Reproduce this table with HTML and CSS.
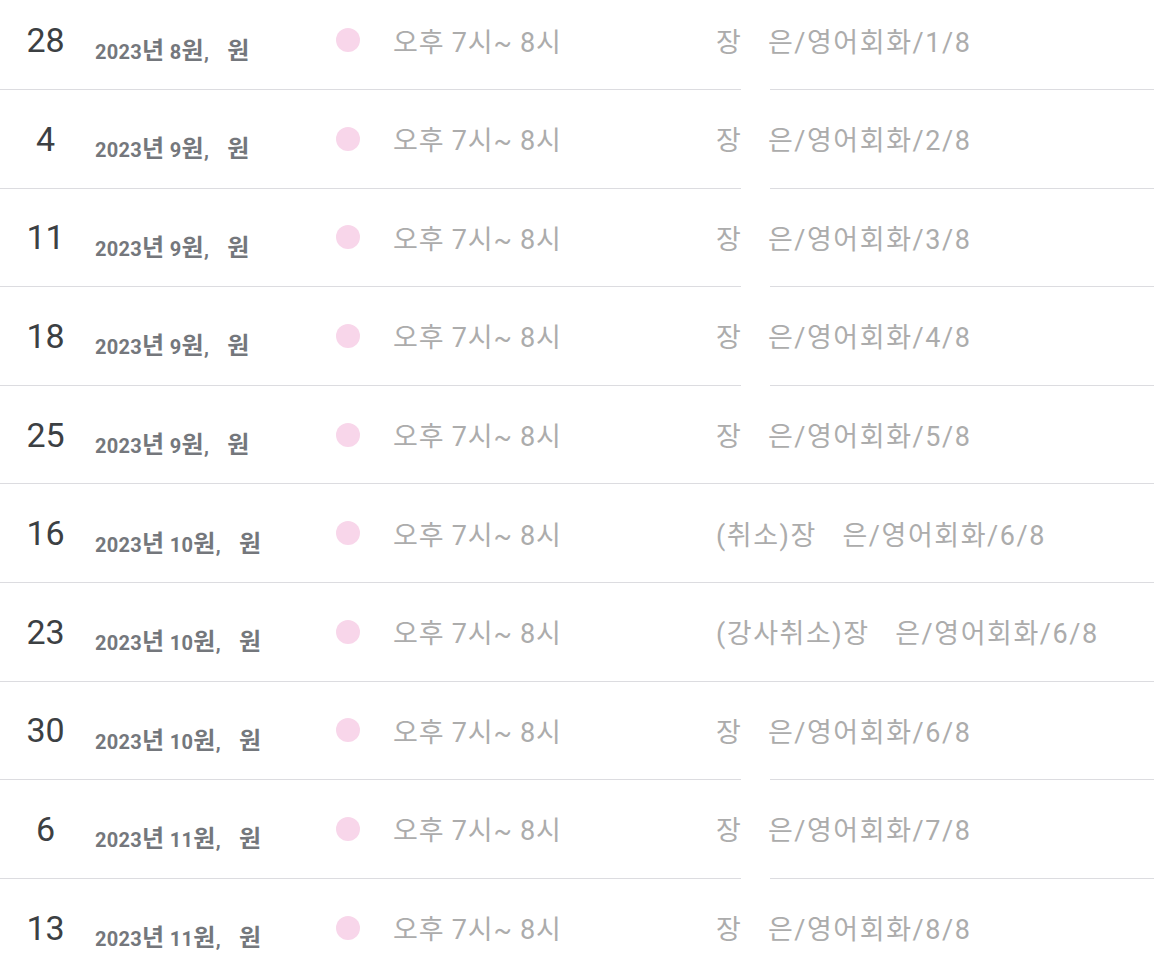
FILE: index.html
```html
<!DOCTYPE html>
<html lang="ko">
<head>
<meta charset="utf-8">
<link rel="stylesheet" href="styles.css">
</head>
<body>
<div class="list">
  <div class="row">
    <div class="date"><span class="day">28</span><span class="label">2023<span class="k">년</span> 8<span class="k">원</span>,<span class="k dow">원</span></span></div>
    <span class="dot"></span>
    <div class="time">오후 7시~ 8시</div>
    <div class="title">장<span class="redact"></span>은/영어회화/1/8</div>
    <span class="gap"></span>
  </div>
  <div class="row">
    <div class="date"><span class="day">4</span><span class="label">2023<span class="k">년</span> 9<span class="k">원</span>,<span class="k dow">원</span></span></div>
    <span class="dot"></span>
    <div class="time">오후 7시~ 8시</div>
    <div class="title">장<span class="redact"></span>은/영어회화/2/8</div>
    <span class="gap"></span>
  </div>
  <div class="row">
    <div class="date"><span class="day">11</span><span class="label">2023<span class="k">년</span> 9<span class="k">원</span>,<span class="k dow">원</span></span></div>
    <span class="dot"></span>
    <div class="time">오후 7시~ 8시</div>
    <div class="title">장<span class="redact"></span>은/영어회화/3/8</div>
    <span class="gap"></span>
  </div>
  <div class="row">
    <div class="date"><span class="day">18</span><span class="label">2023<span class="k">년</span> 9<span class="k">원</span>,<span class="k dow">원</span></span></div>
    <span class="dot"></span>
    <div class="time">오후 7시~ 8시</div>
    <div class="title">장<span class="redact"></span>은/영어회화/4/8</div>
    <span class="gap"></span>
  </div>
  <div class="row">
    <div class="date"><span class="day">25</span><span class="label">2023<span class="k">년</span> 9<span class="k">원</span>,<span class="k dow">원</span></span></div>
    <span class="dot"></span>
    <div class="time">오후 7시~ 8시</div>
    <div class="title">장<span class="redact"></span>은/영어회화/5/8</div>
  </div>
  <div class="row">
    <div class="date"><span class="day">16</span><span class="label">2023<span class="k">년</span> 10<span class="k">원</span>,<span class="k dow">원</span></span></div>
    <span class="dot"></span>
    <div class="time">오후 7시~ 8시</div>
    <div class="title">(취소)장<span class="redact"></span>은/영어회화/6/8</div>
  </div>
  <div class="row">
    <div class="date"><span class="day">23</span><span class="label">2023<span class="k">년</span> 10<span class="k">원</span>,<span class="k dow">원</span></span></div>
    <span class="dot"></span>
    <div class="time">오후 7시~ 8시</div>
    <div class="title">(강사취소)장<span class="redact"></span>은/영어회화/6/8</div>
  </div>
  <div class="row">
    <div class="date"><span class="day">30</span><span class="label">2023<span class="k">년</span> 10<span class="k">원</span>,<span class="k dow">원</span></span></div>
    <span class="dot"></span>
    <div class="time">오후 7시~ 8시</div>
    <div class="title">장<span class="redact"></span>은/영어회화/6/8</div>
    <span class="gap"></span>
  </div>
  <div class="row">
    <div class="date"><span class="day">6</span><span class="label">2023<span class="k">년</span> 11<span class="k">원</span>,<span class="k dow">원</span></span></div>
    <span class="dot"></span>
    <div class="time">오후 7시~ 8시</div>
    <div class="title">장<span class="redact"></span>은/영어회화/7/8</div>
    <span class="gap"></span>
  </div>
  <div class="row">
    <div class="date"><span class="day">13</span><span class="label">2023<span class="k">년</span> 11<span class="k">원</span>,<span class="k dow">원</span></span></div>
    <span class="dot"></span>
    <div class="time">오후 7시~ 8시</div>
    <div class="title">장<span class="redact"></span>은/영어회화/8/8</div>
  </div>
</div>
</body>
</html>
```

FILE: styles.css
```css
html, body {
  margin: 0;
  padding: 0;
  background: #ffffff;
}

body {
  font-family: Roboto, "Noto Sans CJK KR", sans-serif;
  overflow: hidden;
}

.list {
  margin-top: -8.6px;
}

.row {
  position: relative;
  display: flex;
  align-items: center;
  height: 97.6px;
  border-bottom: 1px solid #dcdce0;
}

.date {
  display: flex;
  align-items: center;
  width: 336px;
  flex: none;
}

.day {
  width: 91px;
  text-align: center;
  font-size: 34px;
  color: #3c4043;
  line-height: 40px;
}

.label {
  margin-left: 4px;
  margin-top: 22px;
  font-size: 20px;
  font-weight: 700;
  color: #74777c;
  line-height: 24px;
  white-space: nowrap;
  letter-spacing: 0.3px;
}

.label .k {
  font-size: 1.2em;
  line-height: 1;
  font-weight: 600;
}

.label .dow {
  margin-left: 18px;
}

.dot {
  flex: none;
  width: 24px;
  height: 24px;
  border-radius: 50%;
  background: #f8d6ea;
}

.time {
  flex: none;
  width: 323px;
  margin-left: 33px;
  font-size: 27px;
  color: #acacac;
  white-space: nowrap;
  letter-spacing: 0.8px;
}

.title {
  font-size: 27px;
  color: #acacac;
  white-space: nowrap;
  letter-spacing: 1.55px;
}

.redact {
  display: inline-block;
  width: 25.5px;
}

.gap {
  position: absolute;
  left: 741px;
  bottom: -1px;
  width: 29px;
  height: 1px;
  background: #ffffff;
}
```
